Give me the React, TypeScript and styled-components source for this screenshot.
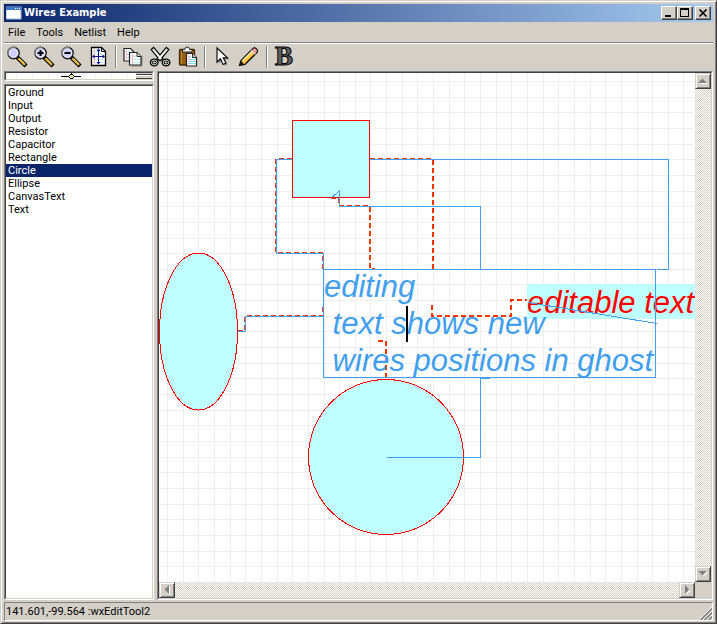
import React, { useState } from "react";
import styled, { createGlobalStyle, css } from "styled-components";

const face = "#d4d0c8";
const shadow = "#808080";
const dark = "#404040";
const ghost = "#429fee";
const wire = "#ff3300";
const shapeFill = "#c0ffff";

const GlobalStyle = createGlobalStyle`
  * { box-sizing: border-box; }
  body {
    margin: 0;
    font: 11px/13px Roboto, "Liberation Sans", sans-serif;
    color: #000;
    background: ${face};
  }
  button { font: inherit; color: inherit; padding: 0; margin: 0; border: 0; background: none; }
`;

const sunken = css`
  border: 1px solid;
  border-color: ${shadow} #fff #fff ${shadow};
  position: relative;
  padding: 1px;
  &::after {
    content: "";
    position: absolute;
    inset: 0;
    border: 1px solid;
    border-color: ${dark} ${face} ${face} ${dark};
    pointer-events: none;
  }
`;

const raised = css`
  background: ${face};
  border: 1px solid;
  border-color: #fff ${dark} ${dark} #fff;
  box-shadow: inset -1px -1px 0 ${shadow};
`;

const Frame = styled.div`
  height: 100vh;
  display: flex;
  flex-direction: column;
  background: ${face};
  border: 1px solid;
  border-color: ${face} ${dark} ${dark} ${face};
  box-shadow: inset 1px 1px 0 #fff, inset -1px -1px 0 ${shadow};
  padding: 3px 3px 2px 3px;
  overflow: hidden;
`;

const TitleBar = styled.header`
  display: flex;
  align-items: center;
  height: 18px;
  flex: none;
  padding: 0 2px;
  background: linear-gradient(90deg, #0a246a, #a6caf0);
`;

const Title = styled.h1`
  flex: 1;
  margin: 0 0 0 2px;
  font: bold 11px/14px "DejaVu Sans Condensed", "DejaVu Sans", sans-serif;
  color: #fff;
`;

const WindowButton = styled.button<{ $apart?: boolean }>`
  ${raised}
  width: 16px;
  height: 14px;
  margin-left: ${(p) => (p.$apart ? 2 : 0)}px;
  svg { display: block; }
`;

const MenuBar = styled.nav`
  display: flex;
  flex: none;
  gap: 11px;
  height: 22px;
  padding: 0 4px;
  border-bottom: 1px solid #fff;
  box-shadow: inset 0 -1px 0 ${shadow};
`;

const MenuItem = styled.button`
  height: 20px;
  font-size: 11px;
`;

const ToolBar = styled.div`
  display: flex;
  flex: none;
  height: 27px;
`;

const ToolButton = styled.button`
  width: 27px;
  height: 26px;
  padding: 1px 1px 1px 2px;
  svg { display: block; overflow: visible; }
`;

const Separator = styled.div`
  width: 2px;
  height: 22px;
  margin: 2px 3px;
  border-left: 1px solid ${shadow};
  border-right: 1px solid #fff;
`;

const Body = styled.div`
  flex: 1;
  min-height: 0;
  display: grid;
  grid-template-columns: 150px minmax(0, 1fr);
  gap: 3px;
`;

const Sidebar = styled.aside`
  display: flex;
  flex-direction: column;
  gap: 3px;
  min-height: 0;
`;

const Preview = styled.div`
  ${sunken}
  flex: none;
  height: 10px;
  background: #fff;
  svg { display: block; width: 100%; height: 6px; }
`;

const PartList = styled.ul`
  ${sunken}
  flex: 1;
  margin: 0;
  list-style: none;
  background: #fff;
  overflow: hidden;
`;

const PartButton = styled.button<{ $selected: boolean }>`
  display: block;
  width: 100%;
  height: 13px;
  padding: 1px 2px 0;
  text-align: left;
  line-height: 12px;
  background: ${(p) => (p.$selected ? "#0a246a" : "transparent")};
  color: ${(p) => (p.$selected ? "#fff" : "#000")};
`;

const CanvasPane = styled.main`
  ${sunken}
  display: grid;
  grid-template-columns: minmax(0, 1fr) 16px;
  grid-template-rows: minmax(0, 1fr) 16px;
  min-height: 0;
`;

const Drawing = styled.svg`
  display: block;
  width: 100%;
  height: 100%;
  background: #fff;
  overflow: hidden;
  text {
    font: italic 31px "Liberation Sans", Arial, sans-serif;
    white-space: pre;
  }
`;

const Track = styled.div<{ $vertical?: boolean }>`
  display: flex;
  flex-direction: ${(p) => (p.$vertical ? "column" : "row")};
  justify-content: space-between;
  background: repeating-conic-gradient(#fff 0 25%, ${face} 0 50%) 0 0 / 2px 2px;
`;

const ScrollButton = styled.button`
  ${raised}
  width: 16px;
  height: 16px;
  border-color: ${face} ${dark} ${dark} ${face};
  box-shadow: inset 1px 1px 0 #fff, inset -1px -1px 0 ${shadow};
  svg { display: block; }
`;

const StatusBar = styled.footer`
  display: flex;
  flex: none;
  justify-content: space-between;
  margin-top: 2px;
  height: 19px;
  border: 1px solid;
  border-color: ${shadow} #fff #fff ${shadow};
  padding-left: 1px;
  line-height: 17px;
  svg { display: block; align-self: flex-end; }
`;

function Magnifier({ sign }: { sign?: "plus" | "minus" }) {
  return (
    <svg width="24" height="24" viewBox="0 0 24 24">
      <path d="M12.5 13.5 L18.5 19.5" stroke="#000" strokeWidth="4.4" strokeLinecap="square" />
      <path d="M13 14 L18.2 19.2" stroke="#e8b830" strokeWidth="2.2" strokeLinecap="square" />
      <path d="M13.6 13.4 L19 18.8" stroke="#fff0a0" strokeWidth="0.8" />
      <circle cx="7.5" cy="8" r="5.6" fill="#d0d0ff" stroke="#202020" strokeWidth="1.6" />
      <circle cx="7.5" cy="8" r="4.4" fill="none" stroke="#f4f4ff" strokeWidth="1" />
      <path d="M2.500 10.500 A5.600 5.600 0 0 1 9.500 2.700" fill="none" stroke="#808080" strokeWidth="1.6" />
      {sign && <path d="M4.500 8h6" stroke="#000" strokeWidth="2" />}
      {sign === "plus" && <path d="M7.500 5v6" stroke="#000" strokeWidth="2" />}
    </svg>
  );
}

function FitPage() {
  return (
    <svg width="24" height="24" viewBox="0 0 24 24">
      <path d="M4.500 2.500h10l4 4V20.500h-14z" fill="#fff" stroke="#000" strokeWidth="1.3" />
      <path d="M14.500 2.500v4h4" fill="none" stroke="#000" />
      <path d="M6 6.500h7M6 9.500h11M6 14.500h11M6 17.500h11" stroke="#b8f0f4" />
      <path d="M7.500 4v16" stroke="#ffb0b0" />
      <path d="M11.500 5v13M6 11.500h11" stroke="#101090" />
      <path d="M11.500 3.500l-2 2.500h4zM11.500 19.500l-2-2.500h4zM5 11.500l2.500-2v4zM18 11.500l-2.500-2v4z" fill="#101090" />
    </svg>
  );
}

function CopyIcon() {
  return (
    <svg width="24" height="24" viewBox="0 0 24 24">
      <path d="M2 3.500h6.500l3 3V16H2z" fill="#fff" stroke="#222" strokeWidth="1.2" />
      <path d="M4 6.500h4M4 9.500h5M4 12.500h5" stroke="#b0ecf0" />
      <path d="M4.500 4.500v11" stroke="#ffb8b8" />
      <path d="M9 21h11V11" fill="none" stroke="#888" />
      <path d="M7.500 7.500h7.500l4 4V20H7.500z" fill="#fff" stroke="#222" strokeWidth="1.2" />
      <path d="M15 7.500v4h4" fill="#ddd" stroke="#222" />
      <path d="M10 11.500h4M10 14.500h8M10 17.500h8" stroke="#b0ecf0" />
      <path d="M10.500 9v10" stroke="#ffb8b8" />
    </svg>
  );
}

function ScissorsIcon() {
  return (
    <svg width="24" height="24" viewBox="0 0 24 24">
      <path d="M3 3l10 12M19 3L9 15" stroke="#000" strokeWidth="4.4" />
      <path d="M3.800 4l8.400 10M18.200 4L9.800 14" stroke="#f4f4f4" strokeWidth="2" />
      <ellipse cx="5.200" cy="17.500" rx="3" ry="2.600" fill={face} stroke="#000" strokeWidth="3" />
      <ellipse cx="17" cy="17.500" rx="3" ry="2.600" fill={face} stroke="#000" strokeWidth="3" />
      <ellipse cx="5.200" cy="17.500" rx="2.800" ry="2.400" fill="none" stroke="#d8d8d8" />
      <ellipse cx="17" cy="17.500" rx="2.800" ry="2.400" fill="none" stroke="#d8d8d8" />
      <circle cx="11" cy="12" r="1.200" fill="#fff" />
    </svg>
  );
}

function PasteIcon() {
  return (
    <svg width="24" height="24" viewBox="0 0 24 24">
      <rect x="3.500" y="4.500" width="15" height="15.500" rx="1" fill="#986010" stroke="#402800" strokeWidth="1.300" />
      <path d="M5.500 6v12.500" stroke="#c08830" />
      <path d="M6.500 7V4.500h2.200q.3-2.500 2.500-2.500t2.500 2.500H16V7z" fill="#f4f4f4" stroke="#222" />
      <path d="M10.500 8.500h6l4 4V21h-10z" fill="#fff" stroke="#222" strokeWidth="1.200" />
      <path d="M16.500 8.500v4h4" fill="#ddd" stroke="#222" />
      <path d="M12 11.500h3M12 14.500h7.500M12 16.500h7.500M12 18.500h7.500" stroke="#70dce8" />
      <path d="M13 9.500v11" stroke="#ffb8b8" />
    </svg>
  );
}

function ArrowIcon() {
  return (
    <svg width="24" height="24" viewBox="0 0 24 24">
      <path d="M7.500 4.500v14.200l3.500-3.200 2.600 5.300 2.800-1.400-2.500-5h4.200z" fill="#888" />
      <path d="M6 3v14l3.400-3.200 2.700 5.700 2.800-1.400-2.600-5.300H16.500z" fill="#fff" stroke="#111" strokeWidth="1.200" />
    </svg>
  );
}

function PencilIcon() {
  return (
    <svg width="24" height="24" viewBox="0 0 24 24">
      <path d="M1.500 20.500L3 15.500 14.500 4q2-2 4 0t0 4L7 19.500z" fill="#ffc840" stroke="#111" strokeWidth="1.300" />
      <path d="M4.500 15.800L15 5.300" stroke="#fff4b0" strokeWidth="1.500" />
      <path d="M7 18L17 8" stroke="#d08820" />
      <path d="M14.500 4q2-2 4 0t0 4l-1 1-4-4z" fill="#f89898" stroke="#111" strokeWidth="0.800" />
      <path d="M13.300 5.200l4 4" stroke="#ddd" strokeWidth="1.400" />
      <path d="M1.500 20.500l1.500-4.500 3 3z" fill="#111" />
    </svg>
  );
}

const BoldMark = styled.text`
  font: bold 27px "Liberation Serif", serif;
`;

function BoldIcon() {
  return (
    <svg width="24" height="24" viewBox="0 0 24 24">
      <BoldMark x="2" y="20" fill="#606060" stroke="#000" strokeWidth="1">B</BoldMark>
    </svg>
  );
}

const tools: (null | { label: string; icon: React.ReactNode })[] = [
  { label: "Zoom", icon: <Magnifier /> },
  { label: "Zoom in", icon: <Magnifier sign="plus" /> },
  { label: "Zoom out", icon: <Magnifier sign="minus" /> },
  { label: "Fit page", icon: <FitPage /> },
  null,
  { label: "Copy", icon: <CopyIcon /> },
  { label: "Cut", icon: <ScissorsIcon /> },
  { label: "Paste", icon: <PasteIcon /> },
  null,
  { label: "Select", icon: <ArrowIcon /> },
  { label: "Edit", icon: <PencilIcon /> },
  null,
  { label: "Bold", icon: <BoldIcon /> },
];

const parts = ["Ground", "Input", "Output", "Resistor", "Capacitor", "Rectangle", "Circle", "Ellipse", "CanvasText", "Text"];

const arrows = {
  up: "M2 9h9L6.500 4.500z",
  down: "M2 4h9L6.500 8.500z",
  left: "M9 2v9L4.500 6.500z",
  right: "M5 2v9l4.500-4.500z",
};

function ScrollArrow({ dir }: { dir: keyof typeof arrows }) {
  return (
    <ScrollButton aria-label={`Scroll ${dir}`}>
      <svg width="14" height="14" viewBox="0 0 14 14">
        <path d={arrows[dir]} fill="#fff" transform="translate(1 1)" />
        <path d={arrows[dir]} fill={shadow} />
      </svg>
    </ScrollButton>
  );
}

const gridStep = 15.65;
const columns = Array.from({ length: 120 }, (_, i) => Math.round(8 + i * gridStep) + 0.5);
const rows = Array.from({ length: 90 }, (_, i) => Math.round(8 + i * gridStep) + 0.5);

/* Committed wires, drawn dashed beneath the ghost preview. */
const committedWires = [
  "M133 86H117V180H164V196",
  "M211 86H274V196",
  "M172 125L180 125V133H211V196H216",
  "M79 258H86V243H164V232",
  "M273 232V243H352V227H368",
  "M219 268H227V306",
];

const ghostWires = [
  "M133 86.500H117.500V180.500H164.500V196",
  "M211 86.500H509.500V196.500H498",
  "M172 125L180.500 118V133.500H321.500V196",
  "M79 258.500H86.500V243.500H164",
  "M228 384.500H321.500V305.500H331",
  "M369 229.500L498 250.500",
  "M164.500 196.500H496.500V304.500H164.500Z",
];

function WireCanvas() {
  return (
    <Drawing role="img" aria-label="Wire diagram">
      <g stroke="#efefef" shapeRendering="crispEdges">
        {columns.map((x) => <line key={`c${x}`} x1={x} x2={x} y1="0" y2="100%" />)}
        {rows.map((y) => <line key={`r${y}`} y1={y} y2={y} x1="0" x2="100%" />)}
      </g>
      <g fill="none" stroke={wire} strokeWidth="2" strokeDasharray="5 3" shapeRendering="crispEdges">
        {committedWires.map((d) => <path key={d} d={d} />)}
      </g>
      <g fill={shapeFill} stroke="#ff0000" shapeRendering="crispEdges">
        <rect x="133.500" y="47.500" width="77" height="77" />
        <ellipse cx="39.500" cy="258.500" rx="39" ry="78.500" />
        <circle cx="227" cy="384" r="77.500" />
      </g>
      <rect x="368" y="211" width="168" height="35" fill={shapeFill} />
      <text x="368" y="240" fill="#ff0000">editable text</text>
      <g fill="none" stroke={ghost} shapeRendering="crispEdges">
        {ghostWires.map((d) => <path key={d} d={d} />)}
      </g>
      <g fill={ghost}>
        <text x="165" y="224">editing</text>
        <text x="165" y="261"> text shows new</text>
        <text x="165" y="298"> wires positions in ghost</text>
      </g>
      <rect x="247" y="233" width="2" height="36" />
    </Drawing>
  );
}

export default function App() {
  const [part, setPart] = useState("Circle");
  return (
    <>
      <GlobalStyle />
      <Frame>
        <TitleBar>
          <svg width="16" height="14" viewBox="0 0 16 14">
            <rect x="0" y="1" width="15" height="12" fill="#fff" stroke="#a0b8d8" />
            <rect x="0" y="1" width="15" height="3" fill="#3a78c8" />
            <path d="M9 2.500h1M11 2.500h1M13 2.500h1" stroke="#fff" />
          </svg>
          <Title>Wires Example</Title>
          <WindowButton aria-label="Minimize">
            <svg width="14" height="12" viewBox="0 0 14 12"><path d="M3 8h6v2H3z" /></svg>
          </WindowButton>
          <WindowButton aria-label="Maximize">
            <svg width="14" height="12" viewBox="0 0 14 12"><path d="M2 1h9v9H2zM3 3v6h7V3z" fillRule="evenodd" /></svg>
          </WindowButton>
          <WindowButton aria-label="Close" $apart>
            <svg width="14" height="12" viewBox="0 0 14 12"><path d="M3.500 2.500l7 7M10.500 2.500l-7 7" stroke="#000" strokeWidth="1.700" /></svg>
          </WindowButton>
        </TitleBar>
        <MenuBar>
          {["File", "Tools", "Netlist", "Help"].map((m) => <MenuItem key={m}>{m}</MenuItem>)}
        </MenuBar>
        <ToolBar role="toolbar">
          {tools.map((t, i) =>
            t ? <ToolButton key={t.label} aria-label={t.label}>{t.icon}</ToolButton> : <Separator key={i} />
          )}
        </ToolBar>
        <Body>
          <Sidebar>
            <Preview>
              <svg shapeRendering="crispEdges">
                <path d="M10.500 0v6M26.500 0v6M42.500 0v6M58.500 0v6M73.500 0v6M89.500 0v6M105.500 0v6M121.500 0v6" stroke="#efefef" />
                <path d="M55 3.500h20" stroke="#000" />
                <path d="M65.500 1l3 2.500-3 2.500-3-2.500z" fill="#e0e8a0" stroke="#000" />
                <rect x="130" width="16" height="6" fill={face} />
                <path d="M130 1.500h16M130 5.500h16" stroke={dark} />
                <path d="M130 2.500h15" stroke="#fff" />
              </svg>
            </Preview>
            <PartList>
              {parts.map((p) => (
                <li key={p}>
                  <PartButton $selected={p === part} aria-pressed={p === part} onClick={() => setPart(p)}>{p}</PartButton>
                </li>
              ))}
            </PartList>
          </Sidebar>
          <CanvasPane>
            <WireCanvas />
            <Track $vertical>
              <ScrollArrow dir="up" />
              <ScrollArrow dir="down" />
            </Track>
            <Track>
              <ScrollArrow dir="left" />
              <ScrollArrow dir="right" />
            </Track>
          </CanvasPane>
        </Body>
        <StatusBar>
          <span>141.601,-99.564 :wxEditTool2</span>
          <svg width="13" height="13" viewBox="0 0 13 13">
            <path d="M0 13L13 0M4 13l9-9M8 13l5-5" stroke="#fff" />
            <path d="M1.500 13L13 1.500M5.500 13L13 5.500M9.500 13L13 9.500" stroke={shadow} strokeWidth="1.600" />
          </svg>
        </StatusBar>
      </Frame>
    </>
  );
}
